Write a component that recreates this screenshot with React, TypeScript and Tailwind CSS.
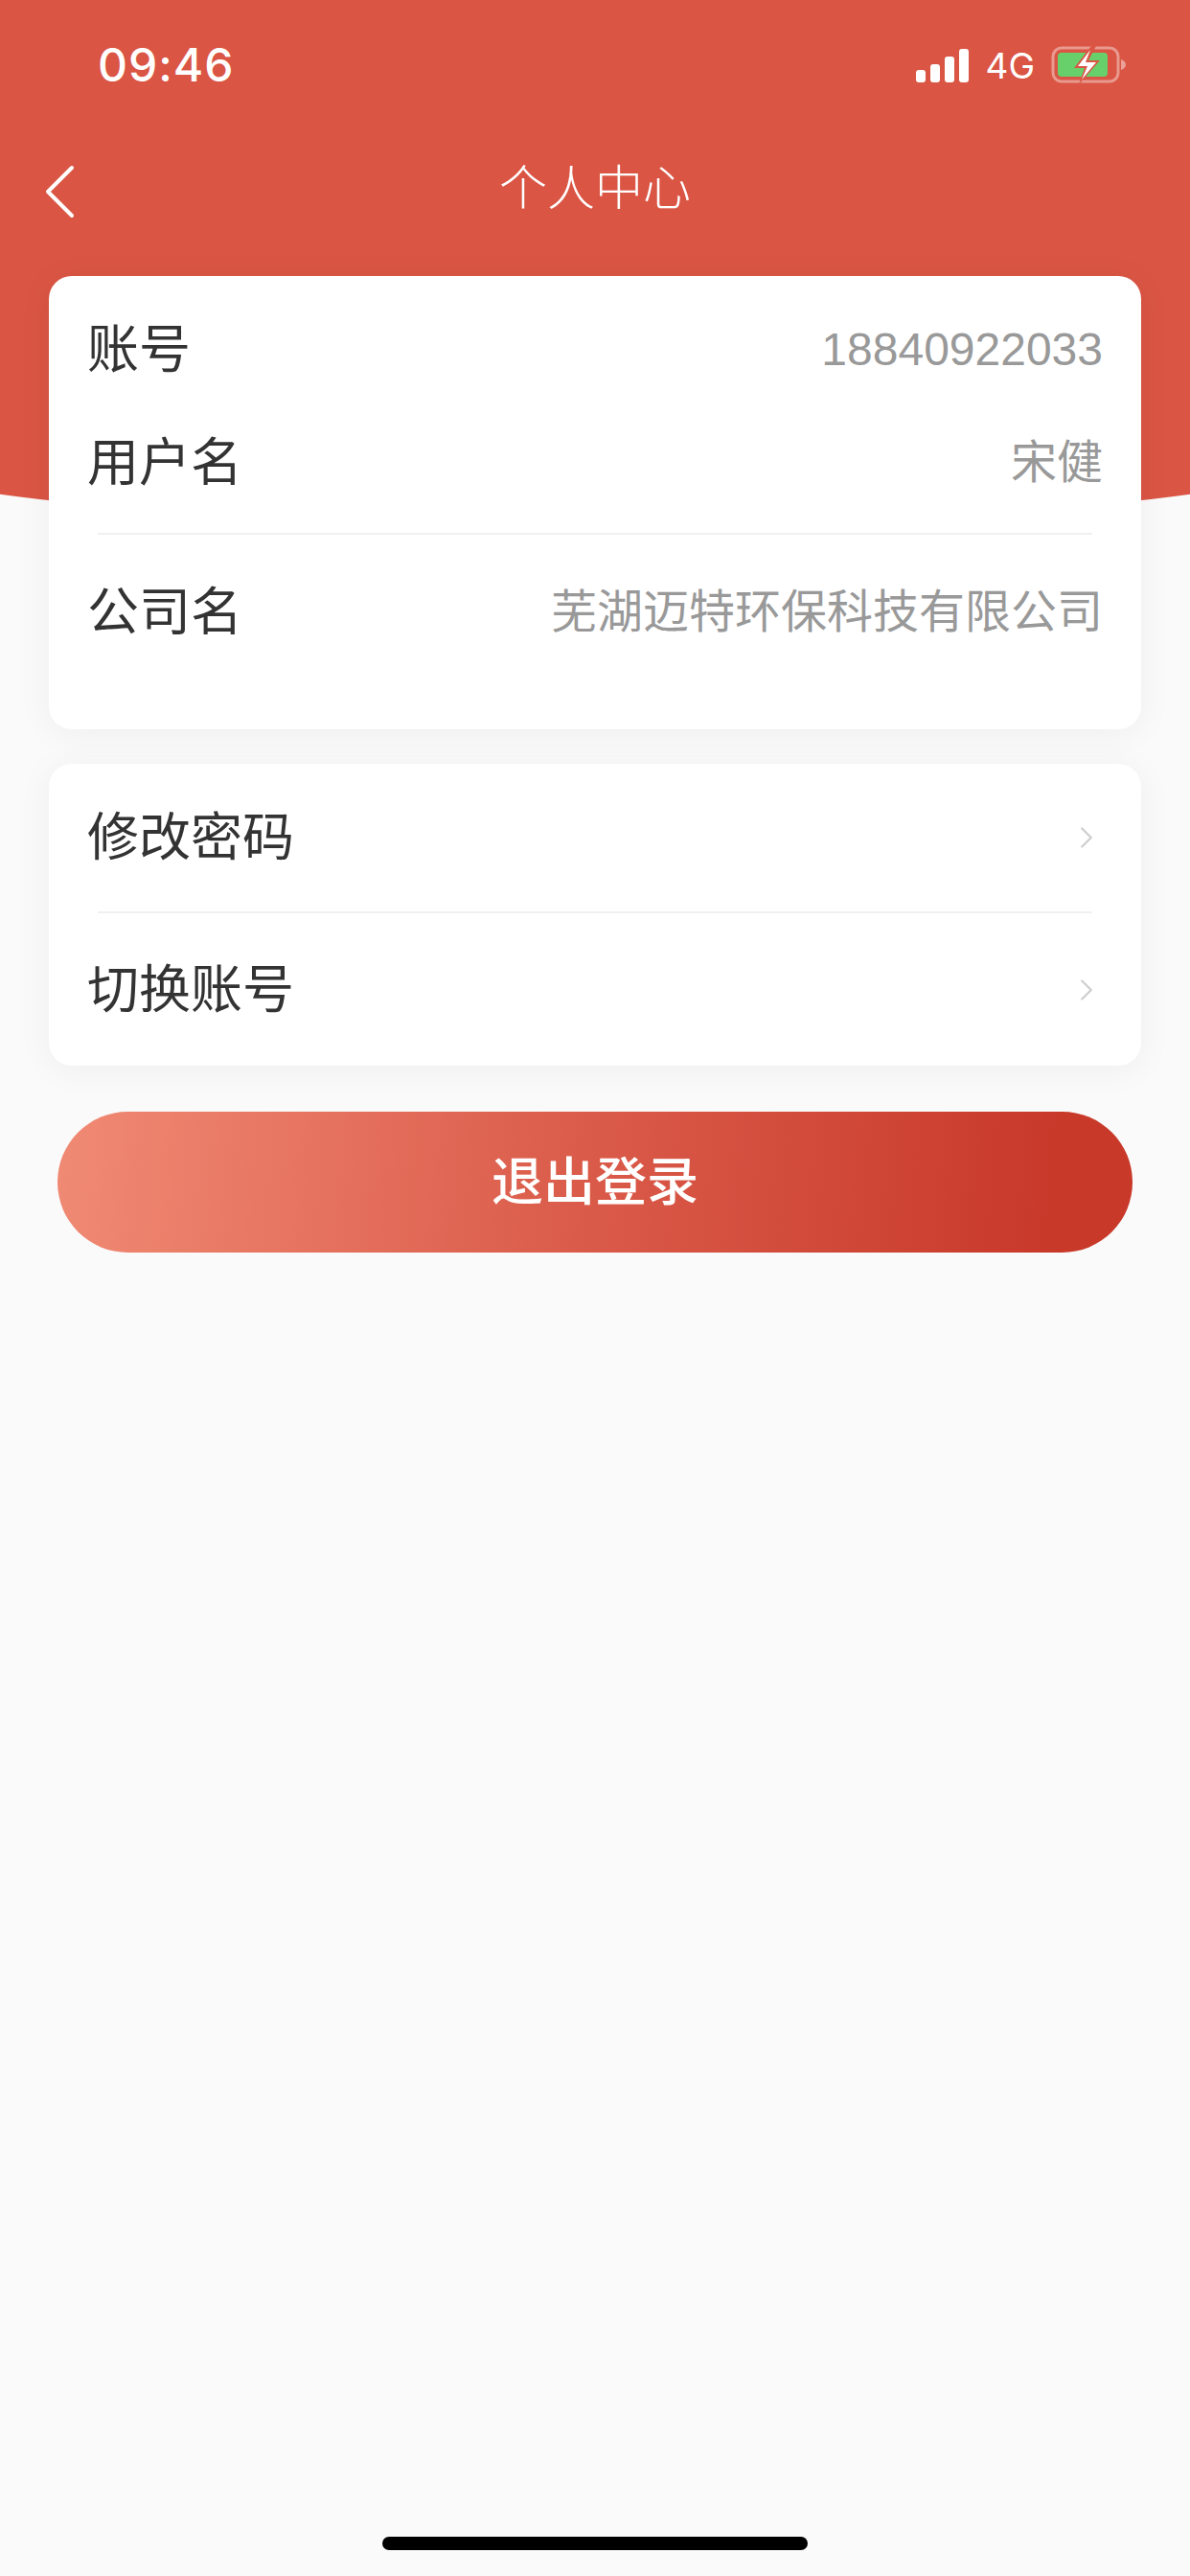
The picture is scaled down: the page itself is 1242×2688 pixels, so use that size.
import { ChevronRight } from "lucide-react";

const sans = "font-['Liberation_Sans','Noto_Sans_CJK_SC',sans-serif]";

function StatusIcons() {
  return (
    <div className="flex items-center">
      {/* signal */}
      <div className="flex h-[35px] items-end gap-[5px]">
        <div className="h-[13px] w-[10px] rounded-[3px] bg-white" />
        <div className="h-[19px] w-[10px] rounded-[3px] bg-white" />
        <div className="h-[27px] w-[10px] rounded-[3px] bg-white" />
        <div className="h-[35px] w-[10px] rounded-[3px] bg-white" />
      </div>
      <span className="ml-[17px] font-['Inter',sans-serif] text-[37px] leading-none text-white">4G</span>
      {/* battery */}
      <svg className="ml-[17px]" width="80" height="40" viewBox="0 0 80 40">
        <rect x="2" y="2" width="68" height="35" rx="9" fill="none" stroke="#ffffff" strokeOpacity="0.4" strokeWidth="3" />
        <path d="M73 14c3 1 5 3 5 5.500s-2 4.500-5 5.500z" fill="#ffffff" fillOpacity="0.45" />
        <rect x="7" y="7" width="52" height="25" rx="4" fill="#68d06a" />
        <path d="M42 0L24 23h11l-6 17 22-25H39l8-15z" fill="#da5544" />
        <path d="M41 4L28 21h10l-6 14 15-18H36l5-13z" fill="#ffffff" />
      </svg>
    </div>
  );
}

function InfoRow({ label, value }: { label: string; value: string }) {
  return (
    <div className="flex h-[118px] items-center justify-between">
      <span className="text-[54px] leading-none text-[#333333]">{label}</span>
      <span className="text-[48px] leading-none text-[#999999]">{value}</span>
    </div>
  );
}

function LinkRow({ label, className }: { label: string; className: string }) {
  return (
    <div className={`flex items-center justify-between ${className}`}>
      <span className="text-[54px] leading-none text-[#333333]">{label}</span>
      <ChevronRight size={38} strokeWidth={1.5} absoluteStrokeWidth={false} className="mr-[-2px] text-[#cfcfcf]" />
    </div>
  );
}

export default function App() {
  return (
    <div className={`flex h-[2688px] w-[1242px] flex-col overflow-hidden bg-[#fafafa] ${sans}`}>
      {/* red header */}
      <div className="h-[547px] shrink-0 overflow-hidden">
        <div className="ml-[-129px] h-[547px] w-[1500px] rounded-b-[50%_71px] bg-[#da5544] px-[129px]">
          <div className="flex h-[136px] items-center justify-between pl-[102px] pr-[65px]">
            <span className="font-['Inter',sans-serif] text-[48px] font-medium leading-none tracking-[1px] text-white">09:46</span>
            <StatusIcons />
          </div>
          <div className="relative flex h-[122px] items-center justify-center">
            <svg className="absolute left-[46px] top-[36px]" width="34" height="56" viewBox="0 0 34 56" fill="none">
              <path d="M29 3L4 28l25 25" stroke="#ffffff" strokeWidth="4" strokeLinecap="round" strokeLinejoin="round" />
            </svg>
            <span className="text-[50px] font-light leading-none text-white">个人中心</span>
          </div>
        </div>
      </div>

      <div className="mt-[-259px] flex flex-col px-[51px]">
        {/* account info */}
        <div className="rounded-[24px] bg-white px-[40px] pb-[63px] pt-[18px] shadow-[0_4px_36px_rgba(0,0,0,0.05)]">
          <InfoRow label="账号" value="18840922033" />
          <InfoRow label="用户名" value="宋健" />
          <div className="mx-[11px] mt-[14px] h-[2px] bg-[#f0f0f0]" />
          <div className="mt-[22px]">
            <InfoRow label="公司名" value="芜湖迈特环保科技有限公司" />
          </div>
        </div>

        {/* actions */}
        <div className="mt-[36px] rounded-[24px] bg-white px-[40px] shadow-[0_4px_36px_rgba(0,0,0,0.05)]">
          <LinkRow label="修改密码" className="h-[154px]" />
          <div className="mx-[11px] h-[2px] bg-[#f0f0f0]" />
          <LinkRow label="切换账号" className="h-[159px]" />
        </div>

        <button className="mx-[9px] mt-[48px] flex h-[147px] items-center justify-center rounded-full bg-[linear-gradient(95deg,#f08a74_0%,#da5a49_50%,#c8392a_92%)] text-[54px] font-medium leading-none text-white">
          退出登录
        </button>
      </div>

      {/* home indicator */}
      <div className="mx-auto mt-auto mb-[27px] h-[14px] w-[444px] rounded-full bg-black" />
    </div>
  );
}
